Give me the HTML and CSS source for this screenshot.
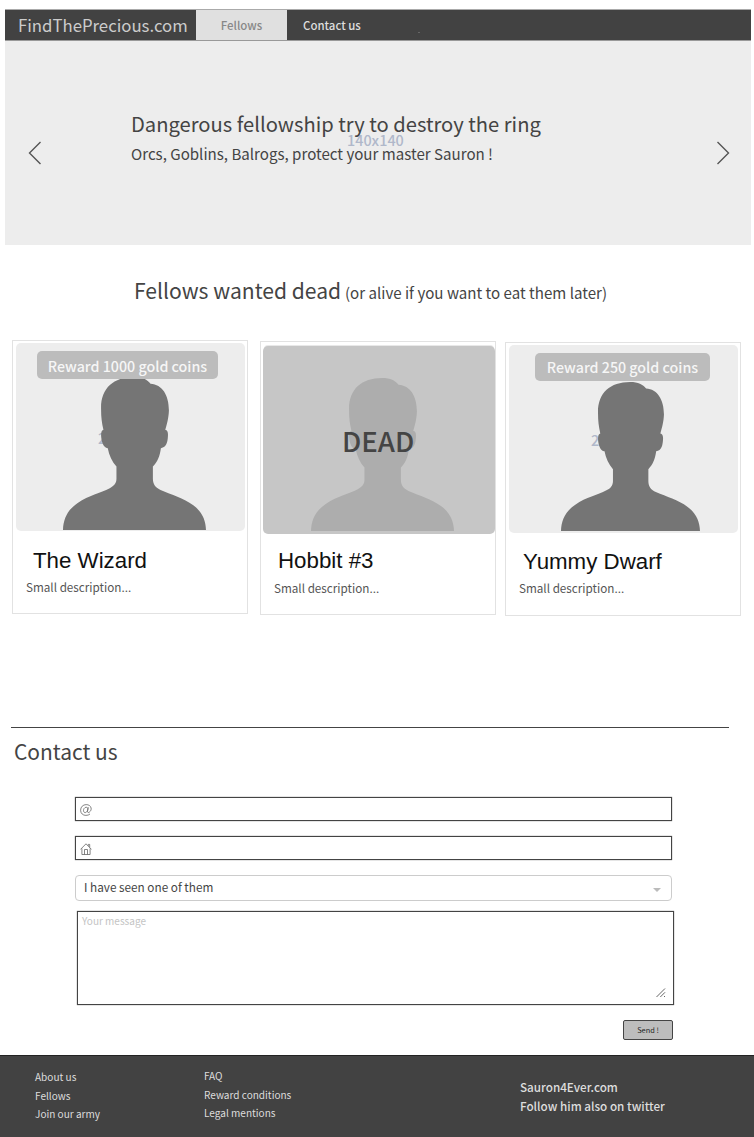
FILE: index.html
```html
<!DOCTYPE html>
<html lang="en">
<head>
<meta charset="utf-8">
<title>FindThePrecious.com</title>
<link rel="stylesheet" href="styles.css">
</head>
<body>
<svg class="defs" aria-hidden="true">
  <symbol id="person" viewBox="0 0 428 458" preserveAspectRatio="none">
    <path d="M0 458C1 425 13 398 44 377C78 354 112 348 140 333C153 326 160 318 160 304V268C147 253 138 234 134 213C120 212 115 192 114 176C114 166 115 160 121 158C116 136 114 120 114 97C112 35 150 0 213 0C238 0 252 8 262 20C297 22 317 54 317 100C316 124 311 140 306 158C313 160 315 166 314 178C313 194 310 210 293 213C290 236 283 254 269 268V304C269 322 278 332 292 338C326 353 360 361 390 384C418 405 427 430 428 458Z"/>
  </symbol>
</svg>

<header class="navbar">
  <a class="brand">FindThePrecious.com</a>
  <nav class="tabs">
    <a class="tab tab-active">Fellows</a>
    <a class="tab">Contact us</a>
  </nav>
  <i class="tick"></i>
</header>

<section class="hero">
  <svg class="arrow" viewBox="0 0 14 24"><path d="M12.5 1L1.5 12L12.5 23"/></svg>
  <div class="hero-copy">
    <span class="size-label">140x140</span>
    <h1>Dangerous fellowship try to destroy the ring</h1>
    <p>Orcs, Goblins, Balrogs, protect your master Sauron !</p>
  </div>
  <svg class="arrow" viewBox="0 0 14 24"><path d="M1.5 1L12.5 12L1.5 23"/></svg>
</section>

<h2 class="wanted"><span class="wanted-main">Fellows wanted dead</span><small>(or alive if you want to eat them later)</small></h2>

<section class="cards">
  <article class="card">
    <div class="photo">
      <span class="photo-size">200x200</span>
      <svg class="person"><use href="#person"/></svg>
      <span class="badge">Reward 1000 gold coins</span>
    </div>
    <h3>The Wizard</h3>
    <p>Small description...</p>
  </article>
  <article class="card card-dead">
    <div class="photo">
      <svg class="person"><use href="#person"/></svg>
      <span class="dead">DEAD</span>
    </div>
    <h3>Hobbit #3</h3>
    <p>Small description...</p>
  </article>
  <article class="card card-dwarf">
    <div class="photo">
      <span class="photo-size">200x200</span>
      <svg class="person"><use href="#person"/></svg>
      <span class="badge">Reward 250 gold coins</span>
    </div>
    <h3>Yummy Dwarf</h3>
    <p>Small description...</p>
  </article>
</section>

<section class="contact">
  <h2>Contact us</h2>
  <form class="form">
    <div class="field">
      <svg class="icon" viewBox="0 0 12 12"><path d="M8.3 3.2L7.5 7.2C7.3 8.6 8.4 8.9 9.3 8.2C10.8 7.1 11.4 5.5 11.1 4C10.6 1.8 8.6.6 6.2.6C3 .6.6 3 .6 6.2C.6 9.4 2.9 11.4 5.9 11.4C7.6 11.4 9 10.9 10 10M7.9 5C7.8 3.7 6.9 3.1 5.9 3.3C4.4 3.5 3.4 5.1 3.5 6.7C3.6 8.2 4.6 8.9 5.7 8.5C6.9 8.1 7.6 6.8 7.9 5"/></svg>
    </div>
    <div class="field">
      <svg class="icon" viewBox="0 0 12 12"><path d="M.5 6.4L6 .8L11.5 6.4M1.9 5.5V11.5H10.1V5.5M8.3 2.8V1.4H9.7V4.3M4.5 11.5V6.5H7.5V11.5"/></svg>
    </div>
    <div class="select"><span>I have seen one of them</span><i class="caret"></i></div>
    <div class="message">
      <span>Your message</span>
      <svg class="grip" viewBox="0 0 10 10"><path d="M.5 9L9 .5M4.3 9L9 4.3M8 9L9 8"/></svg>
    </div>
    <button class="send" type="button">Send !</button>
  </form>
</section>

<footer class="footer">
  <div class="links links-a"><a>About us</a><a>Fellows</a><a>Join our army</a></div>
  <div class="links links-b"><a>FAQ</a><a>Reward conditions</a><a>Legal mentions</a></div>
  <div class="social"><a>Sauron4Ever.com</a><a>Follow him also on twitter</a></div>
</footer>
</body>
</html>
```
FILE: styles.css
```css
* { box-sizing: border-box; }
body {
  margin: 0;
  padding-top: 9px;
  width: 754px;
  height: 1137px;
  overflow: hidden;
  background: #fff;
  color: #444;
  font-family: "Noto Sans CJK SC", "Noto Sans CJK JP", "Open Sans", sans-serif;
  white-space: nowrap;
}
h1, h2, h3, p { margin: 0; font-weight: 400; }
.defs { position: absolute; width: 0; height: 0; }

.navbar {
  display: flex;
  margin: 0 3px 0 5px;
  height: 32px;
  background: #424242;
  border-top: 1px solid #aaa;
  border-bottom: 1px solid #999;
  line-height: 30px;
}
.brand { width: 191px; padding-left: 13px; font-size: 16.75px; color: #ccc; }
.tabs { display: flex; line-height: 30px; }
.tab { padding: 0 16px; font-size: 11.45px; font-weight: 500; color: #ddd; }
.tab-active { width: 91px; padding: 0; text-align: center; background: #e0e0e0; color: #888; }
.tick { width: 2px; height: 1px; margin: 22px 0 0 41px; background: #666; }

.hero {
  display: flex;
  justify-content: space-between;
  margin: 0 3px 0 5px;
  height: 204px;
  padding: 0 21px 0 23px;
  background: #ededed;
}
.arrow { width: 14px; height: 24px; margin-top: 100px; fill: none; stroke: #555; stroke-width: 1.4; }
.hero-copy { position: relative; flex: 1; padding: 66px 0 0 89px; }
.hero-copy h1 { position: relative; font-size: 20.16px; line-height: 34px; }
.hero-copy p { position: relative; font-size: 15.1px; line-height: 24px; }
.size-label { position: absolute; left: 305px; top: 89px; font-size: 14.4px; line-height: 20px; font-weight: 500; color: #b0b8ca; }

.wanted { display: flex; align-items: baseline; padding: 28px 0 0 134px; line-height: 34px; }
.wanted-main { width: 211px; font-size: 21.1px; }
.wanted small { font-size: 15.1px; }

.cards { display: flex; gap: 12px; align-items: flex-start; padding: 31px 0 0 12px; height: 418px; }
.card {
  width: 236px;
  height: 274px;
  padding: 2px;
  border: 1px solid #e2e2e2;
}
.card-dead { margin-top: 1px; }
.card-dwarf { margin: 2px 0 0 -3px; }
.photo { position: relative; height: 188px; margin: 0 0 0 1px; width: 229px; border-radius: 5px; background: #ededed; }
.card-dead .photo { width: 232px; margin: 2px 0 0 0; background: #c6c6c6; border-radius: 5px; box-shadow: 0 -2px 0 -1px #e8e8e8; }
.person { position: absolute; left: 47px; top: 34px; width: 143px; height: 153px; fill: #757575; }
.card-dead .person { left: 48px; top: 32px; fill: #adadad; }
.card-dwarf .person { left: 52px; top: 37px; width: 139px; height: 149px; }
.photo-size { position: absolute; left: 82px; top: 84px; font-size: 14.4px; line-height: 22px; font-weight: 500; color: #b0b8ca; }
.badge { position: absolute; left: 21px; top: 8px; width: 181px; height: 28px; border-radius: 5px; background: #bcbcbc; color: #f6f6f6; font-size: 14.25px; font-weight: 500; line-height: 29px; text-align: center; }
.card-dwarf .badge { left: 26px; width: 175px; line-height: 27px; }
.dead { position: absolute; left: 79px; top: 74px; font-size: 27.6px; line-height: 40px; font-weight: 500; color: #444; }
.card h3 { margin: 15px 0 0 18px; font: 22.3px/30px "Liberation Sans", sans-serif; color: #111; }
.card p { margin: 1px 0 0 11px; font-size: 11.7px; line-height: 20px; color: #555; }
.card-dead h3 { margin: 12px 0 0 15px; }
.card-dead p { margin-top: 2px; }
.card-dwarf h3 { margin-left: 15px; margin-top: 14px; }

.contact { margin-left: 11px; width: 718px; border-top: 1px solid #444; }
.contact h2 { padding: 6px 0 0 3px; font-size: 20.95px; line-height: 34px; }
.form { display: flex; flex-direction: column; width: 597px; margin: 29px 0 0 64px; }
.field { height: 24px; margin-bottom: 15px; padding: 6px 4px; border: 1px solid #444; box-shadow: 0 0 1px #666; }
.icon { display: block; width: 12px; height: 12px; fill: none; stroke: #666; stroke-width: .8; }
.select { display: flex; justify-content: space-between; align-items: center; height: 26px; margin-bottom: 10px; padding: 0 10px 0 9px; border: 1px solid #ccc; border-radius: 4px; font-size: 11.75px; }
.select span { line-height: 20px; margin-bottom: 2px; margin-left: -1px; }
.caret { border: 4px solid transparent; border-top-color: #bbb; border-bottom: 0; margin-top: 3px; }
.message { display: flex; justify-content: space-between; height: 94px; width: 597px; margin-left: 2px; padding: 0 7px 6px 4px; border: 1px solid #444; box-shadow: 0 0 1px #666; font-size: 10px; line-height: 18px; color: #c4c4c4; }
.grip { align-self: flex-end; width: 10px; height: 10px; fill: none; stroke: #555; stroke-width: .9; }
.send { align-self: flex-end; width: 50px; height: 20px; margin: 15px -1px 0 0; padding: 0; border: 1px solid #444; border-radius: 2px; background: #bdbdbd; color: #222; font: 7.4px/16px "Noto Sans CJK SC", sans-serif; }

.footer { display: flex; height: 82px; margin-top: 15px; padding-left: 35px; background: #424242; border-top: 1px solid #222; color: #ddd; font-size: 10.05px; line-height: 18.7px; }
.footer a { display: block; }
.links-a { width: 169px; padding-top: 12px; }
.links-b { width: 316px; padding-top: 11px; }
.social { padding-top: 22px; font-weight: 500; font-size: 11.7px; }
```
